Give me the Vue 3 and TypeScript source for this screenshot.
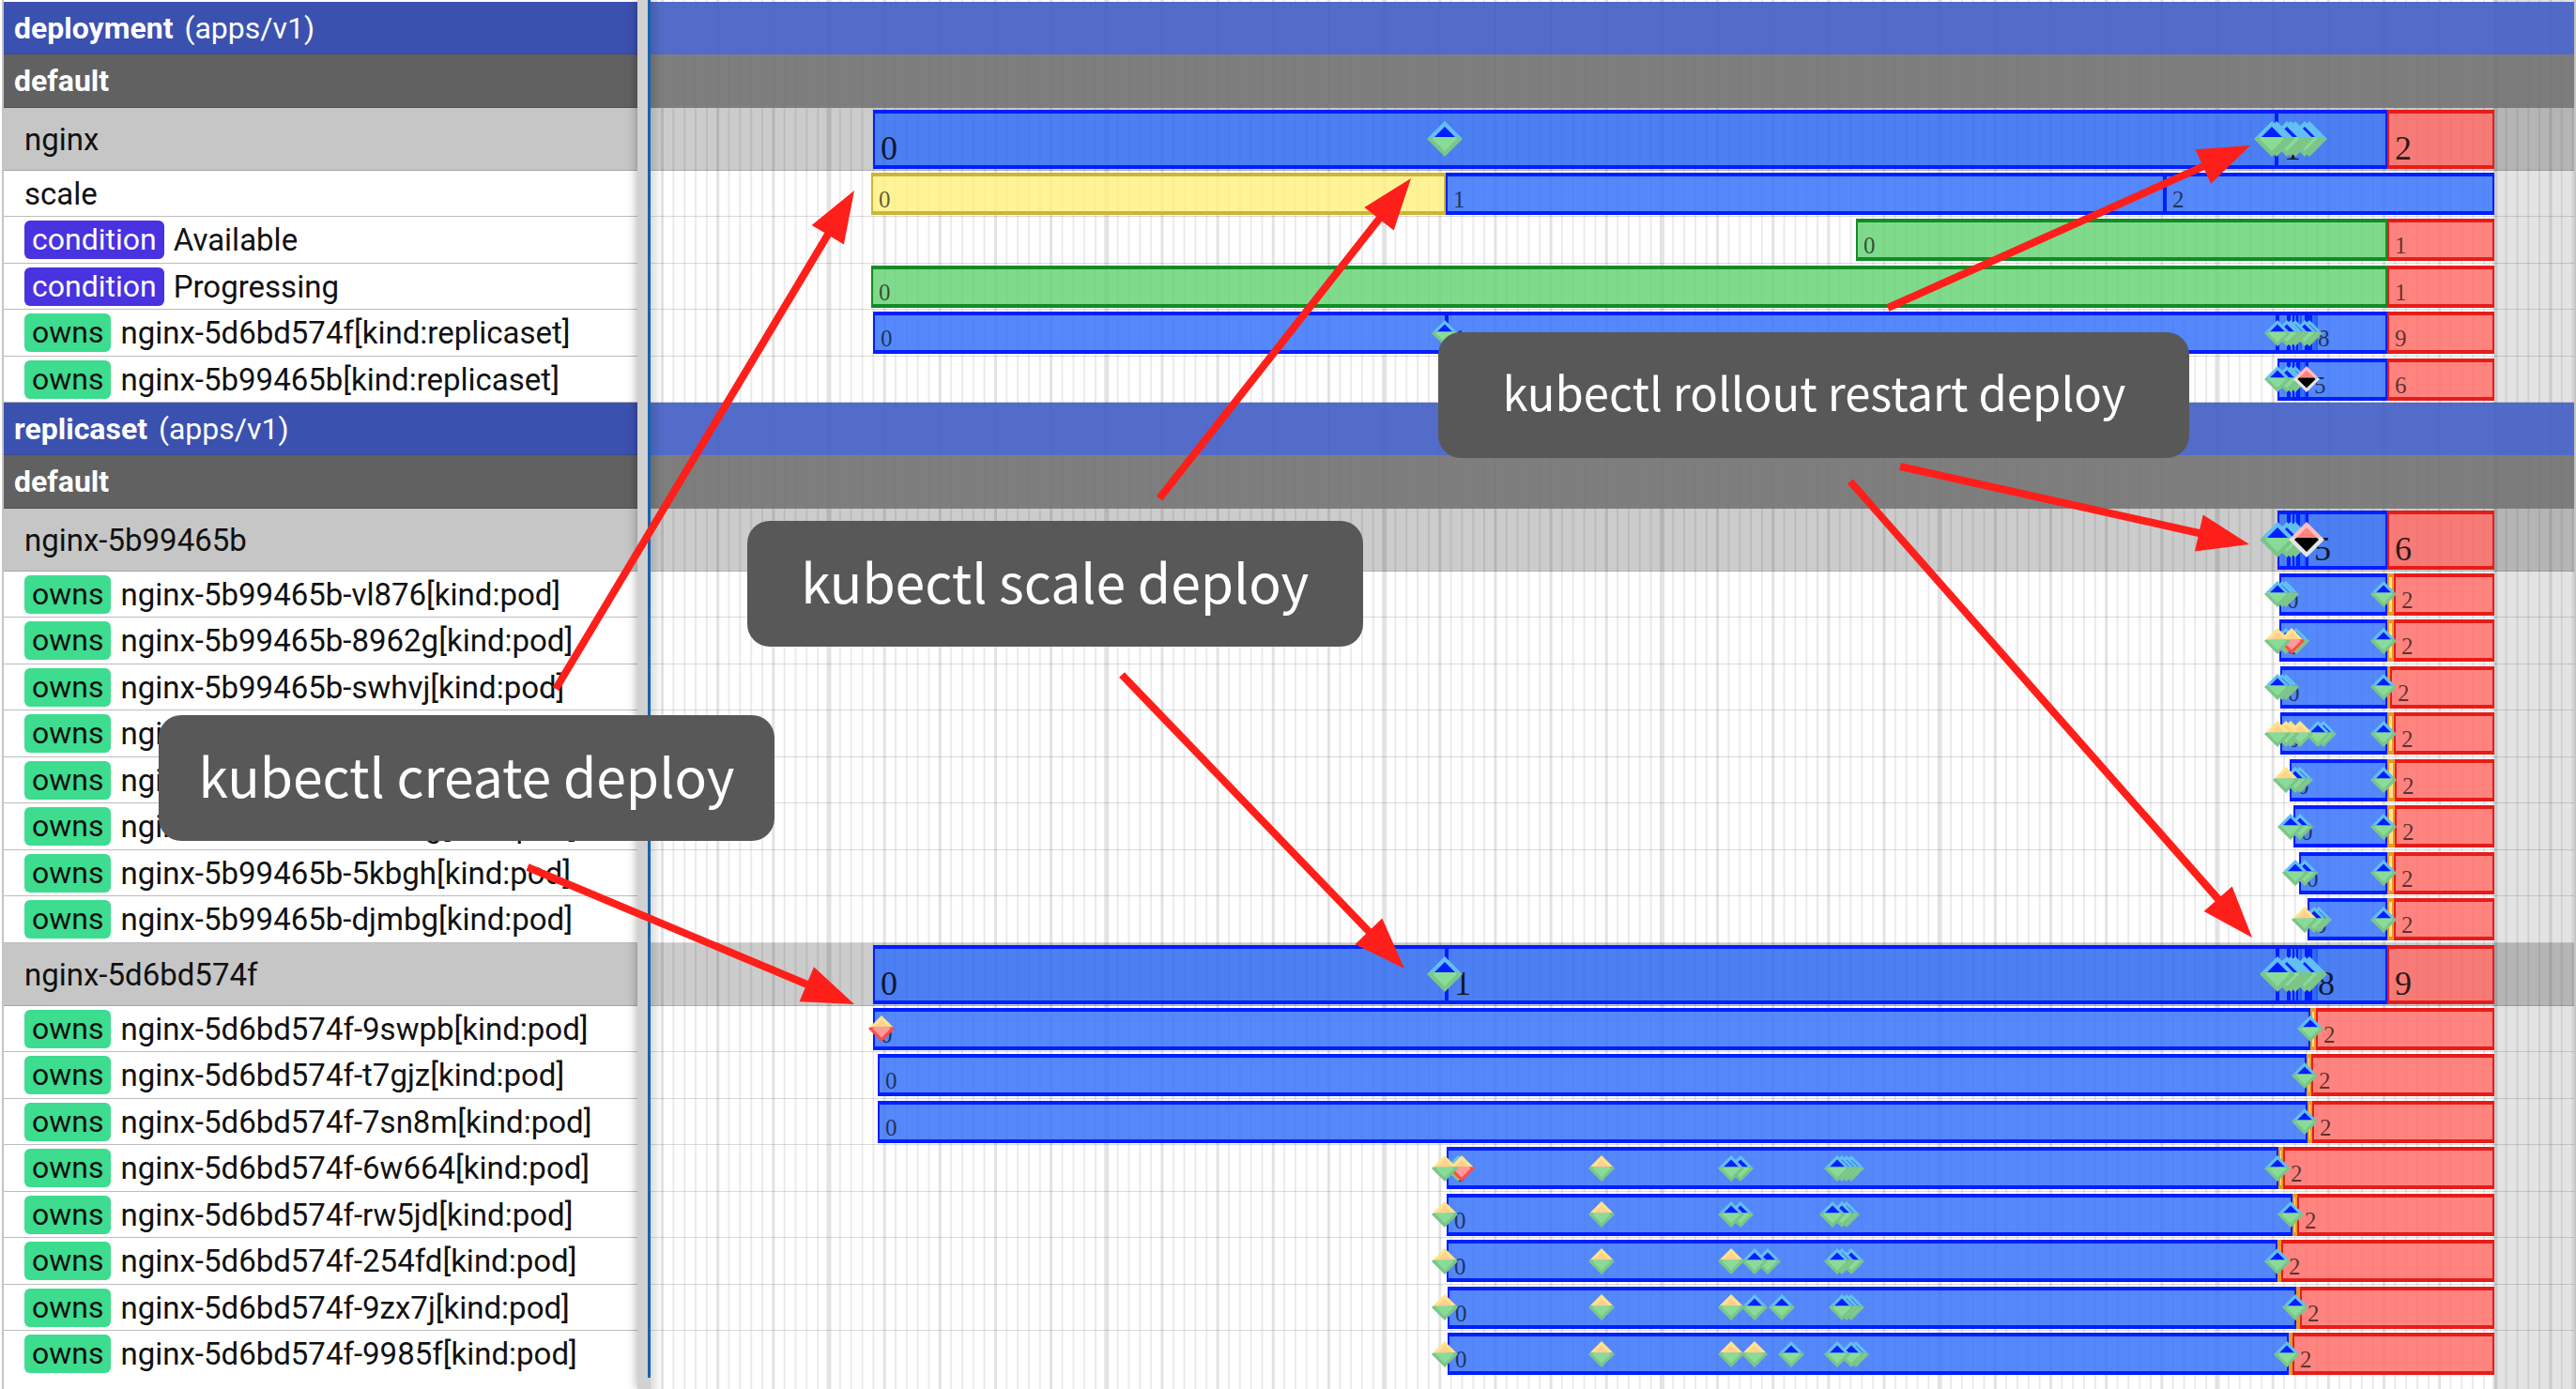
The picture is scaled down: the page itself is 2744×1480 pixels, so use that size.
<script setup lang="ts">
type Tone = 'blue' | 'yellow' | 'green' | 'red' | 'orange'
type Mark = 'update' | 'create' | 'createFail' | 'remove'

interface Segment {
  from: number
  to: number
  tone: Tone
  label: string
}

interface EventMark {
  x: number
  kind: Mark
}

interface Row {
  kind: 'group' | 'namespace' | 'resource' | 'child'
  name: string
  suffix?: string
  chip?: 'condition' | 'owns'
  segments: Segment[]
  marks: EventMark[]
}

interface Arrow {
  x1: number
  y1: number
  x2: number
  y2: number
}

// Extent of the time axis and the moment the recorded log ends.
const axisStart = 693
const axisEnd = 2742
const logEnd = 2657
const axisSpan = axisEnd - axisStart

// Revisions shorter than this have no room for their number.
const minLabelled = 12

const pct = (x: number): string => `${((x - axisStart) / axisSpan) * 100}%`
const pctWidth = (from: number, to: number): string => `${((to - from) / axisSpan) * 100}%`

// Consecutive revisions, numbered from zero; the last entry only closes the run.
const revisions = (starts: number[], tone: Tone = 'blue'): Segment[] =>
  starts.slice(0, -1).map((from, i) => {
    const to = starts[i + 1]
    return { from, to, tone, label: to - from > minLabelled ? String(i) : '' }
  })

const deleted = (from: number, label: string): Segment => ({ from, to: logEnd, tone: 'red', label })

// Marks are painted from the last to the first, so the earliest event stays on top.
const updates = (...xs: number[]): EventMark[] =>
  xs.slice().reverse().map((x) => ({ x, kind: 'update' as Mark }))
const mark = (x: number, kind: Mark): EventMark => ({ x, kind })

const podSegments = (start: number, stop: number, gone: number): Segment[] => [
  { from: start, to: stop, tone: 'blue', label: '0' },
  { from: stop, to: gone, tone: 'orange', label: '' },
  deleted(gone, '2'),
]

const group = (name: string): Row => ({ kind: 'group', name, suffix: '(apps/v1)', segments: [], marks: [] })
const namespace = (): Row => ({ kind: 'namespace', name: 'default', segments: [], marks: [] })
const resource = (name: string, segments: Segment[], marks: EventMark[]): Row => ({ kind: 'resource', name, segments, marks })
const owns = (name: string, segments: Segment[], marks: EventMark[]): Row => ({ kind: 'child', chip: 'owns', name, segments, marks })

const oldRevisions = [
  ...revisions([930, 1541, 2426, 2438, 2442, 2446, 2457, 2459, 2461, 2543]),
  deleted(2543, '9'),
]
const oldMarks = [...updates(2426, 2436, 2440, 2445, 2455, 2460), mark(1539, 'update')]
const newRevisions = [...revisions([2426, 2438, 2442, 2446, 2448, 2457, 2543]), deleted(2543, '6')]
const newMarks = [...updates(2426, 2436, 2440, 2445), mark(2457, 'remove')]

const blocks: Row[][] = [
  [
    group('deployment'),
    namespace(),
    resource('nginx', [...revisions([930, 2425, 2543]), deleted(2543, '2')], [
      ...updates(2420, 2425, 2436, 2440, 2445, 2455, 2460),
      mark(1539, 'update'),
    ]),
  ],
  [
    {
      kind: 'child',
      name: 'scale',
      segments: [
        { from: 928, to: 1540, tone: 'yellow', label: '0' },
        { from: 1540, to: 2306, tone: 'blue', label: '1' },
        { from: 2306, to: logEnd, tone: 'blue', label: '2' },
      ],
      marks: [],
    },
    { kind: 'child', chip: 'condition', name: 'Available', segments: [...revisions([1977, 2543], 'green'), deleted(2543, '1')], marks: [] },
    { kind: 'child', chip: 'condition', name: 'Progressing', segments: [...revisions([928, 2543], 'green'), deleted(2543, '1')], marks: [] },
    owns('nginx-5d6bd574f[kind:replicaset]', oldRevisions, oldMarks),
    owns('nginx-5b99465b[kind:replicaset]', newRevisions, newMarks),
  ],
  [group('replicaset'), namespace(), resource('nginx-5b99465b', newRevisions, newMarks)],
  [
    owns('nginx-5b99465b-vl876[kind:pod]', podSegments(2428, 2543, 2550), updates(2426, 2431, 2435, 2539)),
    owns('nginx-5b99465b-8962g[kind:pod]', podSegments(2428, 2543, 2550), [
      ...updates(2435, 2446, 2539),
      mark(2441, 'createFail'),
      mark(2426, 'create'),
    ]),
    owns('nginx-5b99465b-swhvj[kind:pod]', podSegments(2429, 2543, 2546), updates(2426, 2431, 2435, 2539)),
    owns('nginx-5b99465b-q4tgz[kind:pod]', podSegments(2429, 2543, 2550), [
      ...updates(2469, 2475, 2539),
      mark(2440, 'create'),
      mark(2450, 'create'),
      mark(2435, 'create'),
      mark(2426, 'create'),
    ]),
    owns('nginx-5b99465b-x7kqm[kind:pod]', podSegments(2439, 2543, 2551), [...updates(2445, 2450, 2539), mark(2435, 'create')]),
    owns('nginx-5b99465b-8hkwg[kind:pod]', podSegments(2443, 2543, 2551), updates(2440, 2450, 2539)),
    owns('nginx-5b99465b-5kbgh[kind:pod]', podSegments(2449, 2543, 2550), updates(2445, 2455, 2539)),
    owns('nginx-5b99465b-djmbg[kind:pod]', podSegments(2458, 2543, 2550), [...updates(2465, 2470, 2539), mark(2455, 'create')]),
  ],
  [resource('nginx-5d6bd574f', oldRevisions, oldMarks)],
  [
    owns('nginx-5d6bd574f-9swpb[kind:pod]', podSegments(930, 2461, 2467), [mark(939, 'createFail'), mark(2461, 'update')]),
    owns('nginx-5d6bd574f-t7gjz[kind:pod]', podSegments(935, 2457, 2462), updates(2455)),
    owns('nginx-5d6bd574f-7sn8m[kind:pod]', podSegments(935, 2458, 2463), updates(2455)),
    owns('nginx-5d6bd574f-6w664[kind:pod]', podSegments(1541, 2427, 2432), [
      ...updates(1553, 1844, 1854, 1957, 1962, 1967, 1972, 2426),
      mark(1557, 'createFail'),
      mark(1539, 'create'),
      mark(1706, 'create'),
    ]),
    owns('nginx-5d6bd574f-rw5jd[kind:pod]', podSegments(1541, 2442, 2447), [
      ...updates(1844, 1854, 1952, 1962, 1967, 2440),
      mark(1539, 'create'),
      mark(1706, 'create'),
    ]),
    owns('nginx-5d6bd574f-254fd[kind:pod]', podSegments(1541, 2426, 2430), [
      ...updates(1869, 1883, 1957, 1962, 1972, 2426),
      mark(1539, 'create'),
      mark(1706, 'create'),
      mark(1844, 'create'),
    ]),
    owns('nginx-5d6bd574f-9zx7j[kind:pod]', podSegments(1542, 2446, 2450), [
      ...updates(1869, 1898, 1962, 1967, 1972, 2445),
      mark(1539, 'create'),
      mark(1706, 'create'),
      mark(1844, 'create'),
    ]),
    owns('nginx-5d6bd574f-9985f[kind:pod]', podSegments(1542, 2438, 2442), [
      ...updates(1908, 1957, 1972, 1977, 2436),
      mark(1539, 'create'),
      mark(1706, 'create'),
      mark(1869, 'create'),
      mark(1844, 'create'),
    ]),
  ],
]

// Border and fill of the upper and lower half of each event mark.
const markColors: Record<Mark, { topEdge: string; top: string; bottomEdge: string; bottom: string }> = {
  update: { topEdge: '#62bff2', top: '#001fff', bottomEdge: '#7dc489', bottom: '#88dc98' },
  create: { topEdge: '#ffe488', top: '#ffd08f', bottomEdge: '#7dc489', bottom: '#88dc98' },
  createFail: { topEdge: '#ffe488', top: '#ffd08f', bottomEdge: '#ff4c49', bottom: '#ff9a99' },
  remove: { topEdge: '#ffc0bf', top: '#ff8380', bottomEdge: '#e6e6e6', bottom: '#000000' },
}

// Scale lines: every fifth is stronger, every twenty-fifth is the strongest.
const majorStep = 295.8
const minorStep = majorStep / 25
const firstMajor = 883 - axisStart
const ticks = Array.from({ length: 190 }, (_, i) => {
  const n = i - 16
  const width = n % 25 === 0 ? 5 : n % 5 === 0 ? 3 : 2
  return { x: firstMajor + n * minorStep - width / 2, width, strong: n % 5 === 0 }
}).filter((t) => t.x > 0 && t.x < axisSpan)

const arrows: Arrow[] = [
  { x1: 592, y1: 734, x2: 910, y2: 203 },
  { x1: 1235, y1: 531, x2: 1503, y2: 190 },
  { x1: 2011, y1: 328, x2: 2397, y2: 155 },
  { x1: 2024, y1: 497, x2: 2396, y2: 580 },
  { x1: 1971, y1: 513, x2: 2399, y2: 999 },
  { x1: 1195, y1: 719, x2: 1496, y2: 1032 },
  { x1: 562, y1: 924, x2: 910, y2: 1070 },
]

const arrowPath = ({ x1, y1, x2, y2 }: Arrow): string => {
  const length = Math.hypot(x2 - x1, y2 - y1)
  const ux = (x2 - x1) / length
  const uy = (y2 - y1) / length
  const at = (along: number, side: number): string =>
    `${(x1 + ux * along - uy * side).toFixed(1)} ${(y1 + uy * along + ux * side).toFixed(1)}`
  const neck = length - 55
  return `M${at(0, -4)}L${at(neck, -4)}L${at(neck, -20)}L${at(length, 0)}L${at(neck, 20)}L${at(neck, 4)}L${at(0, 4)}Z`
}
</script>

<template>
  <main class="viewer">
    <aside class="names">
      <div class="list">
        <div v-for="(block, b) in blocks" :key="b" class="block">
          <div v-for="(row, r) in block" :key="r" class="name" :class="row.kind">
            <span v-if="row.chip" class="chip" :class="row.chip">{{ row.chip }}</span>
            <span class="title">{{ row.name }}</span>
            <span v-if="row.suffix" class="suffix">{{ row.suffix }}</span>
          </div>
        </div>
      </div>
      <div class="resizer"></div>
    </aside>

    <section class="timeline">
      <svg class="scale" :viewBox="`0 0 ${axisSpan} 100`" preserveAspectRatio="none" aria-hidden="true">
        <rect v-for="(t, i) in ticks" :key="i" :x="t.x" y="0" :width="t.width" height="100" :fill-opacity="t.strong ? 0.11 : 0.08" />
        <rect :x="logEnd - axisStart" y="0" :width="axisEnd - logEnd" height="100" fill-opacity="0.11" />
      </svg>
      <div v-for="(block, b) in blocks" :key="b" class="block">
        <div v-for="(row, r) in block" :key="r" class="lane" :class="row.kind">
          <div
            v-for="(s, i) in row.segments"
            :key="i"
            class="segment"
            :class="s.tone"
            :style="{ left: pct(s.from), width: pctWidth(s.from, s.to) }"
          >{{ s.label }}</div>
          <svg
            v-for="(m, i) in row.marks"
            :key="`m${i}`"
            class="mark"
            viewBox="-19 -19 38 38"
            :style="{ left: pct(m.x) }"
            aria-hidden="true"
          >
            <path d="M0-19L17-2H-17Z" :fill="markColors[m.kind].topEdge" />
            <path d="M-17-2H17L19 0L0 19L-19 0Z" :fill="markColors[m.kind].bottomEdge" />
            <path d="M0-13L11-2H-11Z" :fill="markColors[m.kind].top" />
            <path d="M-11-2H11L13 0L0 13L-13 0Z" :fill="markColors[m.kind].bottom" />
          </svg>
        </div>
      </div>
    </section>

    <svg class="arrows" viewBox="0 0 2744 1480" preserveAspectRatio="none" aria-hidden="true">
      <path v-for="(a, i) in arrows" :key="i" :d="arrowPath(a)" />
    </svg>
    <div class="callout create">kubectl create deploy</div>
    <div class="callout expand">kubectl scale deploy</div>
    <div class="callout restart">kubectl rollout restart deploy</div>
  </main>
</template>

<style>
body {
  margin: 0;
  background: #fff;
}
</style>

<style scoped>
.viewer {
  position: relative;
  display: flex;
  overflow: hidden;
  font-family: Roboto, "Liberation Sans", sans-serif;
  font-size: 32px;
  color: #111;
}

.names {
  flex: none;
  display: flex;
  box-sizing: border-box;
  width: 690px;
  padding-left: 2px;
}

.list {
  flex: 1;
  min-width: 0;
  border-left: 2px solid #c5c5c5;
  padding: 2px 0 12px;
}

.resizer {
  flex: none;
  width: 11px;
  background: #d1d1d1;
  box-shadow: 0 0 12px rgba(0, 0, 0, 0.35);
  clip-path: inset(0 0 0 -20px);
}

.name,
.lane {
  box-sizing: border-box;
  height: 49px;
  border-bottom: 1px solid #bdbdbd;
}

.name:nth-child(even),
.lane:nth-child(even) {
  height: 50px;
}

.name.group,
.lane.group {
  height: 56px;
}

.name.namespace,
.lane.namespace {
  height: 57px;
}

.name.resource,
.lane.resource {
  height: 67px;
}

.name {
  display: flex;
  align-items: center;
  padding-left: 22px;
  white-space: nowrap;
}

.title {
  font-size: 33px;
}

.name.group,
.name.namespace {
  padding-left: 11px;
  color: #fff;
}

.name.group .title,
.name.namespace .title {
  font-size: 32px;
  font-weight: 700;
}

.name.group {
  background: #3b51af;
  border-color: #3a4a90;
}

.name.namespace {
  background: #616161;
  border-color: #505050;
}

.name.resource {
  background: #c6c6c6;
  border-color: #a5a5a5;
}

.suffix {
  margin-left: 12px;
}

.chip {
  margin-right: 10px;
  padding: 0 8px;
  border-radius: 6px;
  line-height: 41px;
}

.chip.condition {
  background: #4932e0;
  color: #fff;
}

.chip.owns {
  background: #3ddc8f;
}

.timeline {
  position: relative;
  flex: 1;
  min-width: 0;
  padding: 2px 0 12px;
  border-left: 3px solid #d1d1d1;
  border-right: 2px solid #c5c5c5;
}

/* Time cursor, parked at the left end of the axis. */
.timeline::before {
  content: "";
  position: absolute;
  top: 0;
  bottom: 12px;
  left: -3px;
  width: 3px;
  background: #1762b0;
}

.timeline::after {
  content: "";
  position: absolute;
  top: 0;
  bottom: 0;
  left: 0;
  width: 12px;
  background: linear-gradient(to right, rgba(0, 0, 0, 0.14), rgba(0, 0, 0, 0));
}

.scale {
  position: absolute;
  top: 0;
  left: 0;
  width: 100%;
  height: 100%;
}

.lane {
  position: relative;
  border-color: rgba(0, 0, 0, 0.14);
}

.block:last-child .name:last-child,
.block:last-child .lane:last-child {
  border-color: transparent;
}

.lane.group {
  background: rgba(70, 97, 198, 0.93);
  border: 0;
}

.lane.namespace {
  background: rgba(112, 112, 112, 0.9);
  border: 0;
}

.lane.resource {
  background: rgba(0, 0, 0, 0.2);
}

.segment {
  position: absolute;
  top: 2px;
  box-sizing: border-box;
  height: 45px;
  border: 2px solid;
  border-width: 4px 2px;
  padding-left: 6px;
  font-family: "Liberation Serif", serif;
  font-size: 25px;
  line-height: 49px;
  color: rgba(0, 0, 0, 0.65);
}

.lane.resource .segment {
  height: 63px;
  font-size: 36px;
  line-height: 74px;
  color: rgba(0, 0, 0, 0.82);
}

.segment.blue {
  border-color: #001fff;
  background: rgba(46, 108, 249, 0.81);
}

.segment.yellow {
  border-color: #cdb535;
  background: rgba(255, 242, 125, 0.81);
}

.segment.green {
  border-color: #128c24;
  background: rgba(99, 210, 113, 0.81);
}

.segment.red {
  border-color: #e71c18;
  background: rgba(255, 103, 98, 0.81);
}

.segment.orange {
  padding: 0;
  border-color: #e79a22;
  background: #ffe08a;
}

.mark {
  position: absolute;
  top: 50%;
  width: 28px;
  height: 28px;
  margin: -14px 0 0 -14px;
}

.lane.resource .mark {
  width: 38px;
  height: 38px;
  margin: -19px 0 0 -19px;
}

.arrows {
  position: absolute;
  top: 0;
  left: 0;
  width: 100%;
  height: 100%;
  fill: #ff1f1a;
}

.callout {
  position: absolute;
  display: flex;
  align-items: center;
  justify-content: center;
  box-sizing: border-box;
  height: 134px;
  padding-bottom: 8px;
  border-radius: 24px;
  background: #585858;
  color: #fff;
  font-family: "Noto Sans CJK JP", sans-serif;
  font-size: 57px;
  line-height: 126px;
  white-space: nowrap;
}

.create {
  top: 762px;
  left: 169px;
  width: 656px;
}

.expand {
  top: 555px;
  left: 29%;
  width: 656px;
}

.restart {
  top: 354px;
  right: 15%;
  width: 800px;
  font-size: 49px;
}
</style>
